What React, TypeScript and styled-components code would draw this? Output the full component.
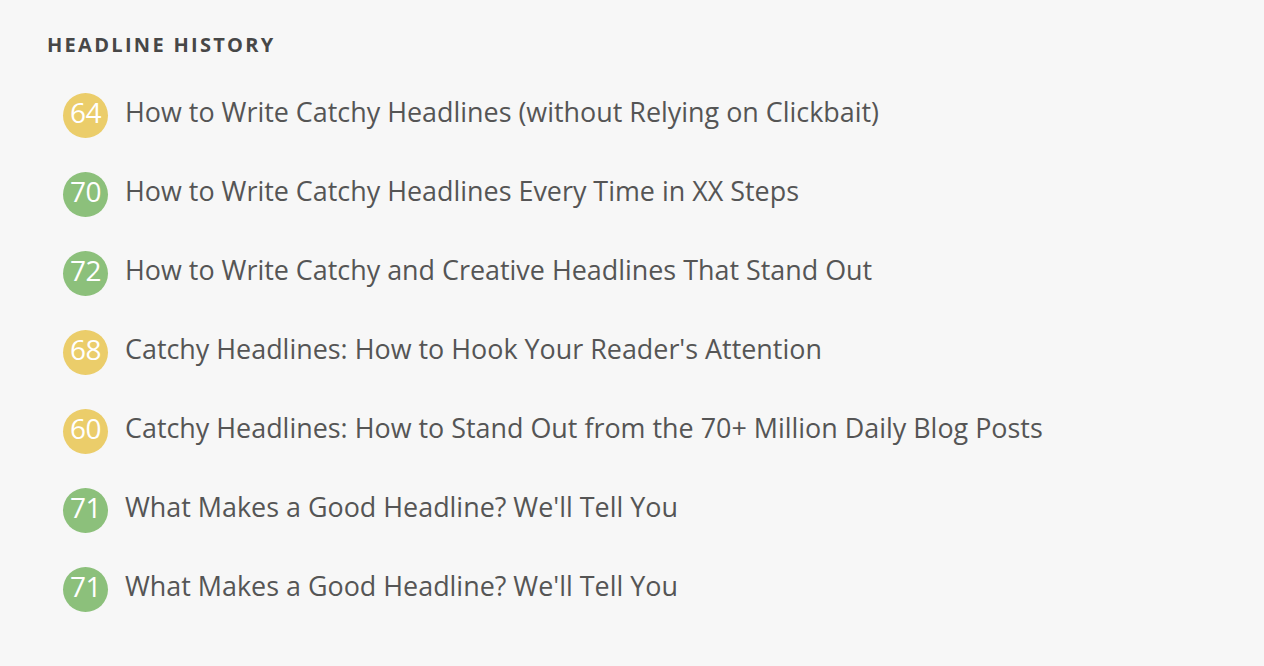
import React from 'react';
import styled, { createGlobalStyle } from 'styled-components';

const GlobalStyle = createGlobalStyle`
  html, body {
    margin: 0;
    padding: 0;
    background: #f7f7f7;
  }
  body {
    font-family: "Open Sans", Lato, sans-serif;
  }
`;

const Page = styled.div`
  width: 1264px;
  height: 666px;
  box-sizing: border-box;
  padding: 33px 47px 0;
  background: #f7f7f7;
`;

const Title = styled.h2`
  margin: 0 0 36px;
  font-size: 20px;
  font-weight: 700;
  letter-spacing: 2.3px;
  color: #474747;
  line-height: 24px;
`;

const List = styled.ul`
  list-style: none;
  margin: 0;
  padding: 0 0 0 16px;
  display: flex;
  flex-direction: column;
  gap: 35px;
`;

const Row = styled.li`
  display: flex;
  align-items: flex-start;
  gap: 17px;
  height: 44px;
`;

const Score = styled.span<{ $tone: 'yellow' | 'green' }>`
  flex: 0 0 45px;
  width: 45px;
  height: 45px;
  border-radius: 50%;
  background: ${({ $tone }) => ($tone === 'yellow' ? '#ebcd6a' : '#8cc07b')};
  color: #fff;
  font-size: 28px;
  line-height: 38px;
  text-align: center;
  letter-spacing: -0.5px;
`;

const Headline = styled.span`
  font-size: 26.9px;
  color: #555;
  line-height: 30px;
  margin-top: 4px;
  white-space: nowrap;
`;

const history = [
  { score: 64, text: 'How to Write Catchy Headlines (without Relying on Clickbait)' },
  { score: 70, text: 'How to Write Catchy Headlines Every Time in XX Steps' },
  { score: 72, text: 'How to Write Catchy and Creative Headlines That Stand Out' },
  { score: 68, text: "Catchy Headlines: How to Hook Your Reader's Attention" },
  { score: 60, text: 'Catchy Headlines: How to Stand Out from the 70+ Million Daily Blog Posts' },
  { score: 71, text: "What Makes a Good Headline? We'll Tell You" },
  { score: 71, text: "What Makes a Good Headline? We'll Tell You" },
];

function App() {
  return (
    <Page>
      <GlobalStyle />
      <Title>HEADLINE HISTORY</Title>
      <List>
        {history.map((item, i) => (
          <Row key={i}>
            <Score $tone={item.score >= 70 ? 'green' : 'yellow'}>{item.score}</Score>
            <Headline>{item.text}</Headline>
          </Row>
        ))}
      </List>
    </Page>
  );
}

export default App;
